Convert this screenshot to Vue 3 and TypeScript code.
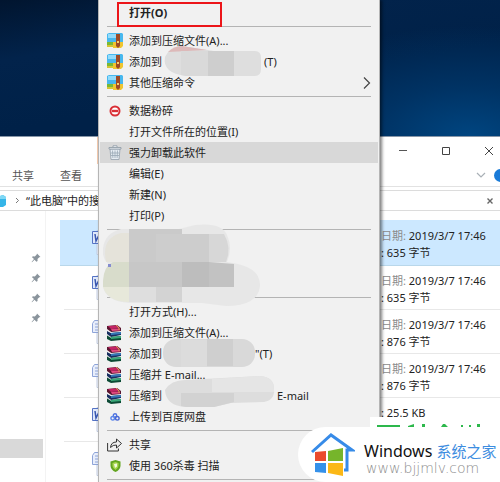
<script setup lang="ts">
type IconName = 'zip' | 'rar' | 'stop' | 'trash' | 'cloud' | 'share' | 'shield'

interface MenuItem {
  kind: 'item' | 'separator' | 'hidden'
  text?: string
  icon?: IconName
  smudge?: 'a' | 'b' | 'c'
  tail?: string
  bold?: boolean
  active?: boolean
  submenu?: boolean
}

const menu: MenuItem[] = [
  { kind: 'item', text: '打开(O)', bold: true },
  { kind: 'separator' },
  { kind: 'item', text: '添加到压缩文件(A)...', icon: 'zip' },
  { kind: 'item', text: '添加到', icon: 'zip', smudge: 'a', tail: '(T)' },
  { kind: 'item', text: '其他压缩命令', icon: 'zip', submenu: true },
  { kind: 'separator' },
  { kind: 'item', text: '数据粉碎', icon: 'stop' },
  { kind: 'item', text: '打开文件所在的位置(I)' },
  { kind: 'item', text: '强力卸载此软件', icon: 'trash', active: true },
  { kind: 'item', text: '编辑(E)' },
  { kind: 'item', text: '新建(N)' },
  { kind: 'item', text: '打印(P)' },
  { kind: 'separator' },
  { kind: 'hidden' },
  { kind: 'separator' },
  { kind: 'item', text: '打开方式(H)...' },
  { kind: 'item', text: '添加到压缩文件(A)...', icon: 'rar' },
  { kind: 'item', text: '添加到', icon: 'rar', smudge: 'b', tail: '"(T)' },
  { kind: 'item', text: '压缩并 E-mail...', icon: 'rar' },
  { kind: 'item', text: '压缩到', icon: 'rar', smudge: 'c', tail: 'E-mail' },
  { kind: 'item', text: '上传到百度网盘', icon: 'cloud' },
  { kind: 'separator' },
  { kind: 'item', text: '共享', icon: 'share' },
  { kind: 'item', text: '使用 360杀毒 扫描', icon: 'shield' },
  { kind: 'separator' },
]

interface FileRow {
  date?: string
  size: string
  doc: 'word' | 'rich'
}

const files: FileRow[] = [
  { date: '2019/3/7 17:46', size: '635 字节', doc: 'word' },
  { date: '2019/3/7 17:46', size: '635 字节', doc: 'word' },
  { date: '2019/3/7 17:46', size: '876 字节', doc: 'rich' },
  { date: '2019/3/7 17:46', size: '876 字节', doc: 'rich' },
  { size: '25.5 KB', doc: 'word' },
  { size: '', doc: 'rich' },
]
</script>

<template>
  <div class="desktop">
    <section class="explorer">
      <header class="titlebar">
        <span class="context-tab"></span>
        <div class="window-buttons">
          <button type="button" aria-label="最小化">
            <svg width="10" height="10" viewBox="0 0 10 10"><path d="M1 4.5h8" stroke="#555" /></svg>
          </button>
          <button type="button" aria-label="最大化">
            <svg width="10" height="10" viewBox="0 0 10 10"><path d="M1.5 1.5h7v7h-7z" fill="none" stroke="#444" /></svg>
          </button>
          <button type="button" aria-label="关闭">
            <svg width="10" height="10" viewBox="0 0 10 10"><path d="M1 1l8 8M9 1l-8 8" stroke="#444" /></svg>
          </button>
        </div>
      </header>
      <nav class="ribbon">
        <button type="button">共享</button>
        <button type="button">查看</button>
        <span class="ribbon-end">
          <svg width="10" height="6" viewBox="0 0 10 6"><path d="M1 1l4 4 4-4" fill="none" stroke="#a9b0b6" stroke-width="1.2" /></svg>
          <span class="help"></span>
        </span>
      </nav>
      <div class="address">
        <svg class="computer" width="6" height="12" viewBox="0 0 6 12">
          <path d="M0 1l3-1 3 2v8l-3 2H0z" fill="#35b5e8" /><path d="M0 1l3-1 3 2v2H0z" fill="#7fd8f5" />
        </svg>
        <svg class="crumb" width="5" height="7" viewBox="0 0 5 7"><path d="M1 1l2.5 2.5L1 6" fill="none" stroke="#777" /></svg>
        <button type="button" class="location">“此电脑”中的搜</button>
        <button type="button" class="clear" aria-label="清除">
          <svg width="8" height="8" viewBox="0 0 8 8"><path d="M1.5 1.5l5 5M6.5 1.5l-5 5" stroke="#666" stroke-width="1.4" /></svg>
        </button>
      </div>
      <div class="content">
        <aside class="sidebar">
          <span v-for="n in 4" :key="n" class="pin">
            <svg width="10" height="10" viewBox="0 0 10 10">
              <path d="M6 0.5l3.5 3.5-1.2.3-1.8 1.8.1 2-1.2.6L3.500 6.700 1 9.300l-.4-.2L3 6 1 4.200l.8-1 2 .2 1.800-1.700z" fill="#8a949c" />
            </svg>
          </span>
          <span class="side-selected"></span>
        </aside>
        <ul class="files">
          <li v-for="(file, i) in files" :key="i" :class="{ selected: i === 0 }">
            <svg class="doc" width="12" height="26" viewBox="0 0 12 26">
              <template v-if="file.doc === 'word'">
                <path d="M5 .5h7v24H5z" fill="#f4f7fd" stroke="#c3cde2" />
                <path d="M.5 1.500h11v12H.5z" fill="#dfe8fa" stroke="#5573c4" />
                <path d="M3 4l1 7 2.500-5 2 5L10 4" fill="none" stroke="#3a58b0" stroke-width="1.500" />
              </template>
              <template v-else>
                <path d="M5 1.500h7v23H5z" fill="#f8faff" stroke="#c3cde2" />
                <path d="M2.500 1.500h9v12h-11v-9z" fill="#e8eefb" stroke="#8ea4d8" />
                <path d="M3 5h8M3 8h8M3 11h8" stroke="#8ea4d8" />
              </template>
            </svg>
            <div class="meta">
              <p v-if="file.date"><span class="key">日期:</span> {{ file.date }}</p>
              <p v-if="file.size">: {{ file.size }}</p>
            </div>
          </li>
        </ul>
      </div>
    </section>

    <div class="menu" role="menu">
      <template v-for="(entry, i) in menu" :key="i">
        <hr v-if="entry.kind === 'separator'" />
        <div v-else-if="entry.kind === 'hidden'" class="hidden-block">
          <svg class="big-smudge" width="158" height="82" viewBox="0 0 158 82">
            <path d="M18 5h58l16-4q27-3 32 10 6 13 0 27 34 4 33 24-2 20-34 20l-24-3H26Q2 77 0 62q-1-13 12-18Q-2 38 0 24 2 9 18 5z" fill="#e7e7e7" />
            <path d="M18 9h8v29H3Q-2 14 18 9z" fill="#e5e3da" />
            <path d="M10 38h16v25H0q-1-20 10-25z" fill="#d8dccb" />
            <path d="M0 63h26v15Q5 78 0 63z" fill="#e7e8da" />
            <path d="M26 5h53v33H26z" fill="#cacaca" />
            <path d="M53 10h53v28H53z" fill="#cdcdcd" />
            <path d="M106 10h15q8 14 2 28h-17z" fill="#d7d7d7" />
            <path d="M26 38h53v25H26z" fill="#c7c7c7" />
            <path d="M79 38h27v25H79z" fill="#bdbdbd" />
            <path d="M106 38l25 2v23h-25z" fill="#c2c2c2" />
            <path d="M26 63h27v15H26z" fill="#dedede" />
            <path d="M53 63h26v15H53z" fill="#d3d3d3" />
            <path d="M5 40h3v3H5z" fill="#858cd0" />
          </svg>
        </div>
        <button v-else type="button" role="menuitem" :class="['item', { bold: entry.bold, active: entry.active }]">
          <span class="icon">
            <svg v-if="entry.icon === 'zip'" width="16" height="15" viewBox="0 0 16 15">
              <path d="M0 1l2-1h13l1 1v8H0z" fill="#48b8ee" /><path d="M1 1h8v4H1z" fill="#93dbfa" />
              <path d="M0 9h10v4l-2 1H0z" fill="#79b935" /><path d="M6 9h10v4l-2 2H6z" fill="#efc52f" />
              <path d="M0 12h6v2H0z" fill="#d5c532" />
              <path d="M9 1h4v12l-2 2-2-2z" fill="#9e4a26" /><path d="M10 8h2v2h-2z" fill="#f6cf68" />
            </svg>
            <svg v-else-if="entry.icon === 'rar'" width="16" height="16" viewBox="0 0 16 16">
              <path d="M0 1l10-1 4 3v3L4 7 0 4z" fill="#5b1630" /><path d="M1 1l9-.5L13 3 4 4z" fill="#c32464" />
              <path d="M4 4l9-.5v2L5 6z" fill="#e0487f" />
              <path d="M0 6l4 2 10-1v3L4 12 0 9z" fill="#182e60" /><path d="M4 8l10-1v2L4 10z" fill="#3579b8" />
              <path d="M0 10l4 2 10-1v4L4 16 0 14z" fill="#0c4a35" /><path d="M4 12l10-1v2L4 14z" fill="#39a878" />
              <path d="M0 5l4 2.500M0 10l4 2.500" stroke="#eee" stroke-width=".8" />
              <path d="M9 0l3 3v2" fill="none" stroke="#d99b50" />
            </svg>
            <svg v-else-if="entry.icon === 'stop'" width="12" height="12" viewBox="0 0 12 12">
              <circle cx="6" cy="6" r="4.500" fill="#fff" stroke="#d92f36" stroke-width="2" />
              <path d="M3 6h6" stroke="#d92f36" stroke-width="2.400" />
            </svg>
            <svg v-else-if="entry.icon === 'trash'" width="14" height="15" viewBox="0 0 14 15">
              <path d="M2 4h10l-1 10.500H3z" fill="#e6edf3" stroke="#93a0ac" stroke-width=".8" />
              <path d="M1 2.500h12v1.500H1zM5 2V.8h4V2" fill="#f4f7fa" stroke="#8995a1" stroke-width=".8" />
              <path d="M4.500 5.500l.4 7.500M7 5.500V13M9.500 5.500L9.100 13M3 8h8M3 10.500h8" stroke="#98a7b5" stroke-width=".8" />
            </svg>
            <svg v-else-if="entry.icon === 'cloud'" width="10" height="8" viewBox="0 0 10 8" fill="none" stroke-width="1.400">
              <circle cx="5" cy="2.500" r="1.700" stroke="#4f74e0" /><circle cx="2.700" cy="5.300" r="1.800" stroke="#5b86ec" />
              <circle cx="7.300" cy="5.300" r="1.800" stroke="#4867d4" />
            </svg>
            <svg v-else-if="entry.icon === 'share'" width="16" height="14" viewBox="0 0 16 14">
              <path d="M.6 5v8h10.800v-2.500M3.500 9.500Q4 4 9.500 4V1l5 4.500-5 4.500V7Q6 6.700 3.500 9.500z" fill="none" stroke="#333" stroke-linejoin="round" />
            </svg>
            <svg v-else-if="entry.icon === 'shield'" width="11" height="12" viewBox="0 0 11 12">
              <path d="M5.500 0L10.500 1.500V6Q10 10 5.500 12 1 10 .5 6V1.500z" fill="#63a51f" />
              <path d="M5.500 2L8.500 3v3Q8 8.500 5.500 10 3 8.500 2.500 6V3z" fill="#a9d64e" />
              <path d="M4 4l3-.5v3L5 8z" fill="#f1fae0" />
            </svg>
          </span>
          <span>{{ entry.text }}</span>
          <svg v-if="entry.smudge === 'a'" class="smudge" width="102" height="31" viewBox="0 0 102 31">
            <path d="M3 11Q8 0 20 0l32 5h41q6 0 6 7v11q0 7-6 7H24Q0 27 3 11z" fill="#dedede" />
            <path d="M6 6Q12 0 20 0l25 4z" fill="#ddb9b9" /><path d="M19 5h27v25H24l-5-1z" fill="#d9d9d9" />
            <path d="M46 5h26v25H46z" fill="#cecece" />
          </svg>
          <svg v-else-if="entry.smudge === 'b'" class="smudge" width="93" height="29" viewBox="0 0 93 29">
            <rect x="1" y="0" width="92" height="28" rx="13" fill="#d9d9d9" />
            <path d="M19 1h26v27H19z" fill="#dcdcdc" /><path d="M45 0h26v27H45z" fill="#cfcfcf" />
          </svg>
          <svg v-else-if="entry.smudge === 'c'" class="smudge high" width="115" height="31" viewBox="0 0 115 31">
            <path d="M3 14Q9 4 23 4L98 0q14 1 14 13 1 11-10 13l-33 1-17 4H24Q4 30 3 14z" fill="#dddddd" />
            <path d="M50 3l48-3q14 1 14 13v3H50z" fill="#e5e5e5" /><path d="M19 17h53v9l-20 5H24l-5-1z" fill="#d2d2d2" />
          </svg>
          <span v-if="entry.tail">{{ entry.tail }}</span>
          <svg v-if="entry.submenu" class="arrow" width="8" height="12" viewBox="0 0 8 12"><path d="M1 .5L6.500 6 1 11.500" fill="none" stroke="#444" stroke-width="1.200" /></svg>
        </button>
      </template>
      <span class="highlight"></span>
    </div>

    <footer class="watermark">
      <svg class="green-marks" width="130" height="10" viewBox="0 0 130 10">
        <path d="M0 0h130v10H0z" fill="#fff" />
        <path d="M7 8h23v2H7zM38 9l6-2v3h-6zM52 7h3v3h-3zM71 10l2-3h2l3 3zM91 8h2v2h-2zM99 8h2v2h-2zM107 7h3v3h-3z" fill="#2db84c" />
      </svg>
      <div class="brand">
        <svg width="44" height="44" viewBox="0 0 44 44">
          <path d="M1 19L20 2l21 15h-5v20H33" fill="none" stroke="#378be8" stroke-width="3" />
          <path d="M4 19l11-1v10H4z" fill="#ea4b2d" /><path d="M17 18l15-3v13H17z" fill="#76b52b" />
          <path d="M4 30h11v10L4 39z" fill="#3591ea" /><path d="M17 30h15v13l-15-3z" fill="#fbb817" />
        </svg>
        <div class="brand-text">
          <p class="brand-name">Windows <span>系统之家</span></p>
          <p class="brand-url">www.bjjmlv.com</p>
        </div>
      </div>
    </footer>
  </div>
</template>

<style>
body {
  margin: 0;
}
</style>

<style scoped>
.desktop {
  position: relative;
  box-sizing: border-box;
  height: 100vh;
  padding-top: 136px;
  overflow: hidden;
  display: flex;
  flex-direction: column;
  background:
    radial-gradient(ellipse 220px 110px at 94% 136px, #004580 0%, rgba(0, 62, 118, 0.6) 45%, transparent 100%),
    linear-gradient(170deg, #01152f 0, #02234b 60px, #002148 130px);
  font-family: "Noto Sans", "Noto Sans CJK SC", sans-serif;
  font-size: 11px;
  line-height: 17px;
  color: #222;
}
p {
  margin: 0;
}
svg {
  display: block;
  flex: none;
}
button {
  padding: 0;
  border: 0;
  background: none;
  color: inherit;
  font: inherit;
}
.explorer {
  flex: 1;
  display: flex;
  flex-direction: column;
  background: #fff;
}
.titlebar {
  display: flex;
  justify-content: space-between;
  height: 27px;
  border-top: 1px solid #8796a8;
}
.context-tab {
  width: 30px;
  margin-left: 97px;
  background: #f8cdb0;
}
.window-buttons {
  display: flex;
}
.window-buttons button {
  display: grid;
  place-items: center;
  width: 43px;
}
.window-buttons button:last-child {
  margin-right: -10px;
}
.ribbon {
  display: flex;
  align-items: center;
  gap: 26px;
  height: 22px;
  padding-left: 12px;
  border-bottom: 1px solid #e2e2e2;
  color: #555;
}
.ribbon-end {
  display: flex;
  align-items: center;
  gap: 8px;
  margin-left: auto;
  margin-right: -7px;
}
.help {
  width: 13px;
  height: 13px;
  border-radius: 50%;
  background: #1a7bd8;
}
.address {
  display: flex;
  align-items: center;
  height: 19px;
  margin-top: 3px;
  border: solid #dcdcdc;
  border-width: 1px 0;
}
.crumb {
  margin-left: 9px;
}
.location {
  margin-left: 6px;
}
.clear {
  margin: 0 6px 0 auto;
}
.content {
  flex: 1;
  display: flex;
}
.sidebar {
  display: flex;
  flex-direction: column;
  width: 45px;
  padding-top: 37px;
  border-right: 1px solid #f3f3f3;
}
.pin {
  display: flex;
  align-items: center;
  justify-content: flex-end;
  height: 20px;
  padding-right: 4px;
}
.side-selected {
  height: 19px;
  margin: 111px 2px 0 0;
  background: #d9d9d9;
}
.files {
  flex: 1;
  margin: 0;
  padding: 9px 0 0 14px;
  list-style: none;
}
.files li {
  display: flex;
  justify-content: space-between;
  box-sizing: border-box;
  height: 44px;
  margin-left: 4px;
  padding: 6px 0 0 28px;
  border-bottom: 1px solid #e8e8e8;
}
.files li.selected {
  height: 46px;
  margin-left: 0;
  padding-left: 32px;
  padding-top: 7px;
  background: #cce8ff;
  border-bottom-color: #b9d7ea;
}
.doc {
  margin-top: 3px;
}
.meta {
  width: 119px;
  white-space: nowrap;
}
.key {
  color: #8b8b8b;
}
.menu {
  position: absolute;
  top: 0;
  left: 98px;
  width: 280px;
  padding-top: 2px;
  border: solid #b5b5b5;
  border-width: 0 1px;
  background: #f1f1f1;
  box-shadow: 2px 0 3px rgba(0, 0, 0, 0.5);
}
.item {
  display: flex;
  align-items: center;
  width: 278px;
  height: 21px;
  margin: 0 1px;
  padding: 0 7px;
  text-align: left;
  white-space: nowrap;
}
.item.bold {
  font-weight: 700;
}
.item.active {
  background: #d8d8d8;
}
.icon {
  display: grid;
  place-items: center;
  width: 16px;
  margin-right: 6px;
}
.menu hr {
  height: 1px;
  margin: 3px 8px;
  border: 0;
  background: #b4b4b4;
}
.smudge {
  margin: -8px 0;
}
.smudge.high {
  margin: -12px 0 -4px;
}
.arrow {
  margin-left: auto;
}
.hidden-block {
  position: relative;
  height: 61px;
}
.big-smudge {
  position: absolute;
  top: -9px;
  left: 4px;
}
.highlight {
  position: absolute;
  top: 2px;
  left: 18px;
  width: 101px;
  height: 21px;
  border: 2px solid #ec1519;
}
.watermark {
  position: absolute;
  right: 0;
  bottom: 0;
  display: flex;
  flex-direction: column;
  align-items: flex-end;
}
.brand {
  display: flex;
  align-items: center;
  gap: 9px;
  box-sizing: border-box;
  width: 202px;
  height: 55px;
  padding-left: 13px;
  border-radius: 28px 0 0 28px;
  background: #fff;
}
.brand-text {
  padding-top: 8px;
  white-space: nowrap;
}
.brand-name {
  font-size: 16px;
  line-height: 18px;
  color: #111;
}
.brand-name span {
  font-size: 15px;
  color: #3d8de0;
}
.brand-url {
  padding-left: 2px;
  font-family: "DejaVu Sans", sans-serif;
  font-size: 14px;
  font-weight: 200;
  line-height: 16px;
  color: #8c8c8c;
}
</style>
